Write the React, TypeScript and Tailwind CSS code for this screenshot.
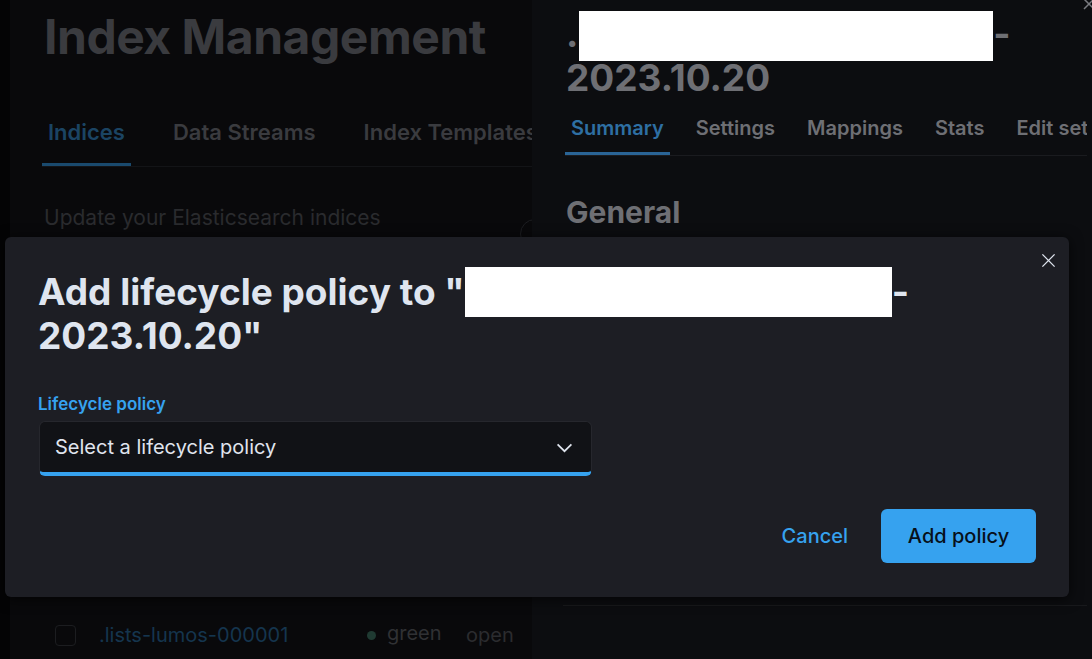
export default function App() {
  return (
    <div className="relative flex w-[1092px] h-[659px] overflow-hidden bg-[#040405] font-['Inter',sans-serif]">
      {/* Index management page, dimmed */}
      <div className="relative ml-[10px] w-[522px] shrink-0 overflow-hidden bg-[#09090b] pl-[34px] pt-[8px]">
        <h1 className="text-[48px] leading-[58px] font-bold tracking-[-0.01em] text-[#3a3b3f] whitespace-nowrap">
          Index Management
        </h1>
        <div className="mt-[50px] flex gap-[36px] border-b border-[#131417] -ml-[2px] whitespace-nowrap">
          <div className="px-[6px] pb-[14px] border-b-[3px] border-[#1a4a6e] text-[22px] leading-[33px] font-semibold text-[#1b4463]">
            Indices
          </div>
          <div className="px-[6px] pb-[14px] border-b-[3px] border-transparent text-[22px] leading-[33px] font-semibold text-[#3a3b3f]">
            Data Streams
          </div>
          <div className="px-[6px] pb-[14px] border-b-[3px] border-transparent text-[22px] leading-[33px] font-semibold text-[#3a3b3f]">
            Index Templates
          </div>
        </div>
        <p className="mt-[36px] text-[21px] leading-[30px] text-[#2a2b2e] whitespace-nowrap">
          Update your Elasticsearch indices
        </p>
        <div className="mt-[382px] flex items-center h-[40px] whitespace-nowrap">
          <div className="ml-[11px] w-[21px] h-[21px] rounded-[4px] border border-[#1c1d20]" />
          <span className="ml-[23px] w-[268px] text-[20px] text-[#15354e]">.lists-lumos-000001</span>
          <span className="w-[9px] h-[9px] rounded-full bg-[#1f3a32]" />
          <span className="ml-[11px] w-[79px] text-[20px] text-[#303134] -mt-[4px]">green</span>
          <span className="text-[20px] text-[#2b2c2f]">open</span>
        </div>
        <div className="absolute left-[510px] top-[219px] w-[30px] h-[30px] rounded-full border border-[#1c1d21]" />
      </div>

      {/* Index detail flyout, dimmed */}
      <div className="relative flex-1 overflow-hidden bg-[#0c0d10] pl-[34px] pr-[5px] pt-[12px]">
        <h2 className="text-[37px] leading-[44px] font-bold text-[#6e6f74] whitespace-nowrap">
          .<span className="inline-block w-[414px] h-[50px] -my-[6px] align-[-8px] ml-[1px] bg-white" />-
          <br />
          2023.10.20
        </h2>
        <div className="mt-[13px] -ml-[1px] flex gap-[20px] overflow-hidden border-b border-[#1a1b1f] whitespace-nowrap">
          <div className="px-[6px] pb-[9px] border-b-[3px] border-[#2a6496] text-[20px] leading-[30px] font-semibold text-[#2e6fa3]">
            Summary
          </div>
          <div className="px-[6px] pb-[9px] border-b-[3px] border-transparent text-[20px] leading-[30px] font-semibold text-[#6e6f74]">
            Settings
          </div>
          <div className="px-[6px] pb-[9px] border-b-[3px] border-transparent text-[20px] leading-[30px] font-semibold text-[#6e6f74]">
            Mappings
          </div>
          <div className="px-[6px] pb-[9px] border-b-[3px] border-transparent text-[20px] leading-[30px] font-semibold text-[#6e6f74]">
            Stats
          </div>
          <div className="px-[6px] pb-[9px] border-b-[3px] border-transparent text-[20px] leading-[30px] font-semibold text-[#6e6f74]">
            Edit settings
          </div>
        </div>
        <h3 className="mt-[38px] text-[30px] leading-[36px] font-bold text-[#6e6f74]">General</h3>
        <div className="mt-[375px] -ml-[3px] border-t border-[#18191c]" />
        <svg className="absolute left-[549px] -top-[4px]" width="16" height="16" viewBox="0 0 16 16" fill="none" stroke="#7a7b80" strokeWidth="1.5">
          <path d="M3 3l10 10M13 3L3 13" />
        </svg>
      </div>

      {/* Modal */}
      <div className="absolute left-[5px] top-[237px] w-[1064px] h-[360px] rounded-[6px] bg-[#1d1e24] shadow-[0_2px_14px_rgba(0,0,0,0.7)] pl-[33px] pt-[33px]">
        <button className="absolute left-[1034px] top-[14px] w-[18px] h-[18px] flex items-center justify-center">
          <svg width="15" height="15" viewBox="0 0 16 16" fill="none" stroke="#dfe5ef" strokeWidth="1.4">
            <path d="M1.5 1.5l13 13M14.5 1.5l-13 13" />
          </svg>
        </button>
        <h2 className="text-[37px] leading-[44px] font-bold text-[#dfe5ef] whitespace-nowrap">
          Add lifecycle policy to "<span className="inline-block w-[427px] h-[50px] -my-[6px] align-[-6px] bg-white" />-
          <br />
          2023.10.20"
        </h2>
        <label className="block mt-[34px] text-[17px] leading-[24px] font-semibold text-[#36a2ef]">
          Lifecycle policy
        </label>
        <div className="mt-[5px] ml-[1px] w-[553px] h-[55px] flex items-center justify-between rounded-[6px] border border-[#26272d] border-b-[4px] border-b-[#36a2ef] bg-[#111216] pl-[15px] pr-[18px]">
          <span className="text-[20px] text-[#e0e5ee]">Select a lifecycle policy</span>
          <svg width="17" height="17" viewBox="0 0 16 16" fill="none" stroke="#e0e5ee" strokeWidth="1.6">
            <path d="M1.5 5l6.5 6.5L14.5 5" />
          </svg>
        </div>
        <div className="mt-[33px] pr-[33px] flex items-center justify-end">
          <button className="mr-[33px] text-[20px] font-medium text-[#36a2ef]">Cancel</button>
          <button className="w-[155px] h-[54px] rounded-[6px] bg-[#36a2ef] text-[20px] font-medium text-[#07101a]">
            Add policy
          </button>
        </div>
      </div>
    </div>
  );
}
